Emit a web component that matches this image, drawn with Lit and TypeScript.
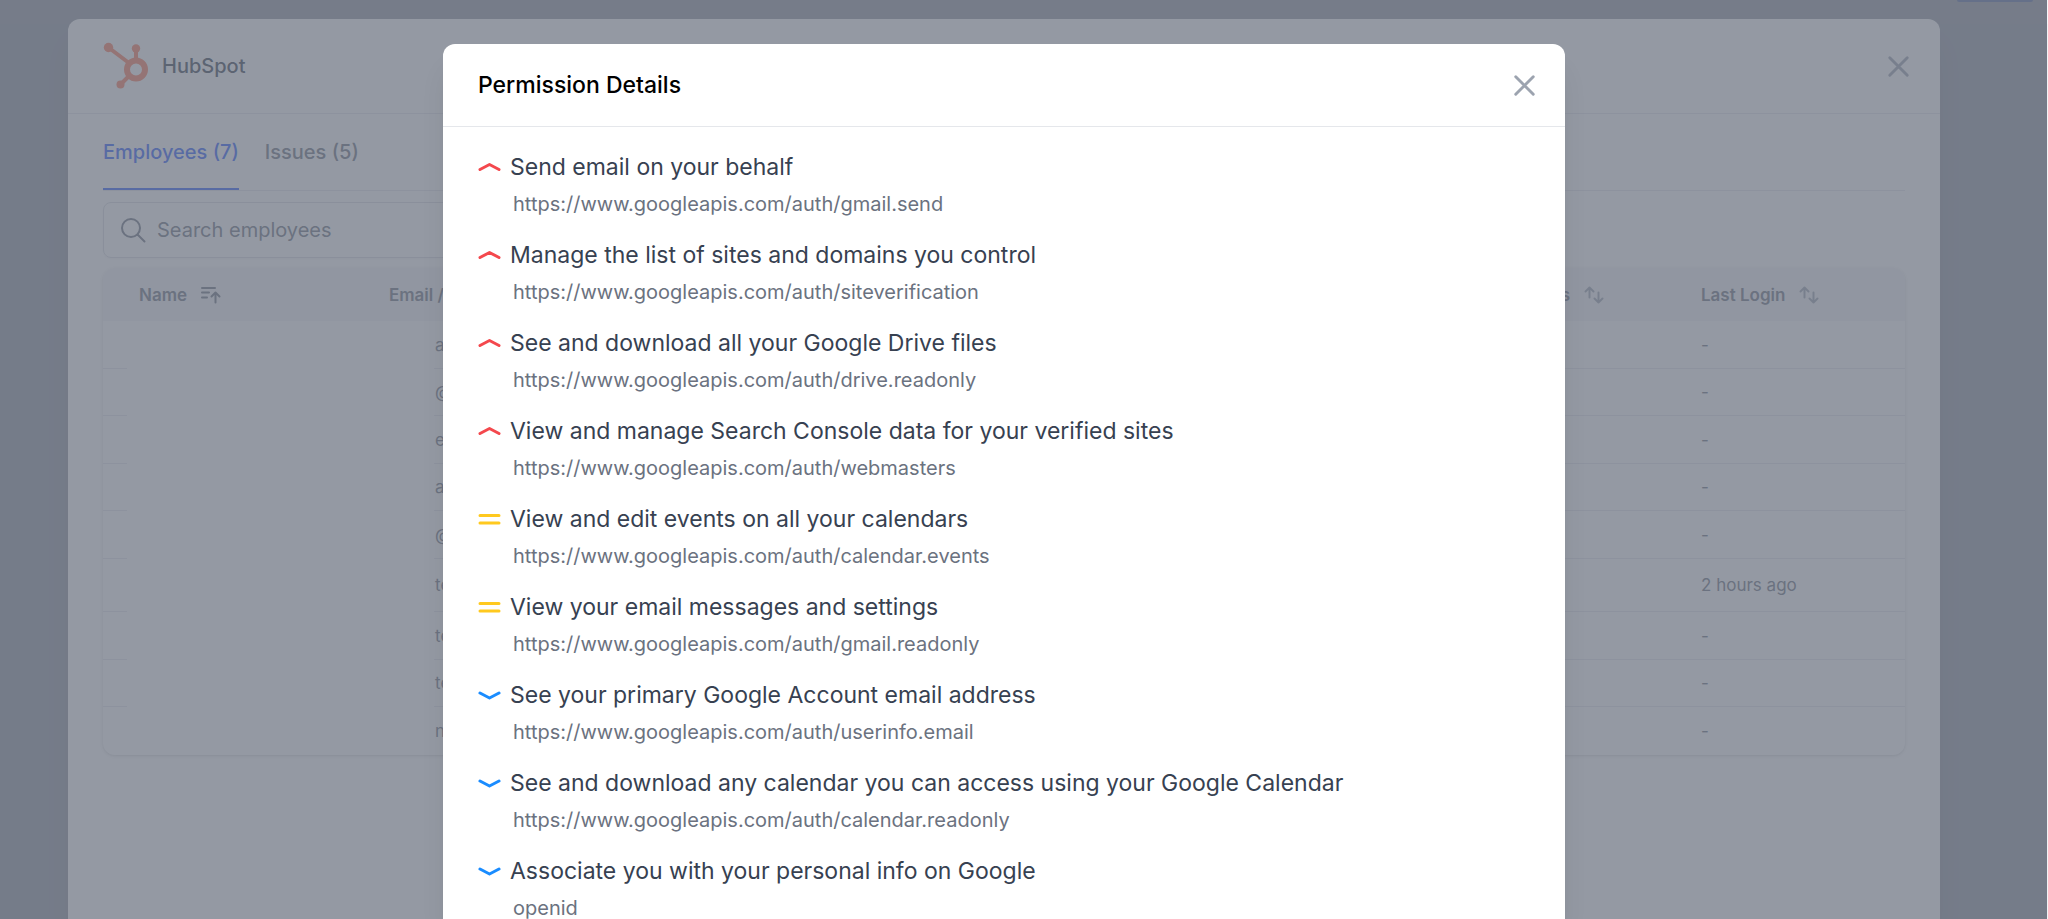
import { LitElement, html, css, svg } from "lit";
import { customElement, property } from "lit/decorators.js";

type Level = "high" | "medium" | "low";

interface Permission {
  level: Level;
  title: string;
  scope: string;
}

const API = "https://www.googleapis.com/auth/";

const PERMISSIONS: Permission[] = [
  { level: "high", title: "Send email on your behalf", scope: API + "gmail.send" },
  { level: "high", title: "Manage the list of sites and domains you control", scope: API + "siteverification" },
  { level: "high", title: "See and download all your Google Drive files", scope: API + "drive.readonly" },
  { level: "high", title: "View and manage Search Console data for your verified sites", scope: API + "webmasters" },
  { level: "medium", title: "View and edit events on all your calendars", scope: API + "calendar.events" },
  { level: "medium", title: "View your email messages and settings", scope: API + "gmail.readonly" },
  { level: "low", title: "See your primary Google Account email address", scope: API + "userinfo.email" },
  { level: "low", title: "See and download any calendar you can access using your Google Calendar", scope: API + "calendar.readonly" },
  { level: "low", title: "Associate you with your personal info on Google", scope: "openid" },
];

const EMPLOYEES = [
  { email: "a@", login: "-" },
  { email: "@n", login: "-" },
  { email: "e@", login: "-" },
  { email: "at", login: "-" },
  { email: "@", login: "-" },
  { email: "te", login: "2 hours ago" },
  { email: "te", login: "-" },
  { email: "te", login: "-" },
  { email: "n", login: "-" },
];

const sortIcon = html`<svg class="sort" viewBox="0 0 20 18" aria-hidden="true">
  <path d="M1.500 5.500 5.500 1.500l4 4M5.500 1.500v10M10.500 12.500l4 4 4-4M14.500 16.500v-10" />
</svg>`;

const sortedIcon = html`<svg class="sort sorted" viewBox="0 0 20 18" aria-hidden="true">
  <path d="M1 2h13M1 6.500h7M1 11.500h5M10.500 10.500l4-4 4 4M14.500 6.500v10" />
</svg>`;

@customElement("close-button")
export class CloseButton extends LitElement {
  @property() label = "Close";

  static styles = css`
    :host { display: block; }
    .close {
      display: block;
      padding: 0;
      border: 0;
      background: none;
      color: #9ca3af;
      cursor: pointer;
    }
    svg { display: block; width: 35px; height: 35px; }
  `;

  render() {
    return html`<button class="close" type="button" aria-label=${this.label}>
      <svg viewBox="0 0 24 24" fill="none" stroke="currentColor" stroke-width="2" stroke-linecap="round">
        <path d="M6 18 18 6M6 6l12 12" />
      </svg>
    </button>`;
  }
}

@customElement("level-icon")
export class LevelIcon extends LitElement {
  @property() level: Level = "low";

  static styles = css`
    :host { display: block; }
    svg { display: block; width: 23px; height: 16px; fill: none; stroke-width: 3; stroke-linecap: round; stroke-linejoin: round; }
    .high { stroke: #f4484d; }
    .medium { stroke: #ffc91f; }
    .low { stroke: #1a8cff; }
  `;

  render() {
    const shape = {
      high: svg`<path d="M2 10.500 11.500 5.500 21 10.500" />`,
      medium: svg`<path d="M2 4.500h19M2 12h19" />`,
      low: svg`<path d="M2 6l9.500 5L21 6" />`,
    }[this.level];
    return html`<svg class=${this.level} viewBox="0 0 23 16" aria-hidden="true">${shape}</svg>`;
  }
}

@customElement("employees-panel")
export class EmployeesPanel extends LitElement {
  static styles = css`
    :host {
      display: block;
      flex: 1;
      background: #fff;
      border-radius: 12px 12px 0 0;
      box-shadow: 0 23px 29px -6px rgba(0, 0, 0, 0.1), 0 12px 12px -6px rgba(0, 0, 0, 0.04);
    }
    .head {
      display: flex;
      align-items: center;
      gap: 13px;
      height: 94px;
      padding: 0 24px 0 35px;
      border-bottom: 1px solid #e5e7eb;
    }
    .logo { width: 46px; height: 48px; }
    h2 { flex: 1; margin: 0; font-size: 20px; font-weight: 500; line-height: 28px; color: #374151; }
    .body { padding: 0 35px; }
    .tabs { display: flex; gap: 26px; height: 76px; border-bottom: 1px solid #e5e7eb; }
    .tab {
      padding: 2px 0 0;
      border: 0;
      border-bottom: 2px solid transparent;
      background: none;
      font: 500 20px/28px Inter, sans-serif;
      color: #6b7280;
    }
    .tab[aria-selected="true"] { color: #2a5bff; border-color: #2a5bff; }
    .search {
      display: flex;
      align-items: center;
      gap: 11px;
      box-sizing: border-box;
      max-width: 524px;
      height: 56px;
      margin: 11px 0 10px;
      padding: 0 16px;
      border: 1px solid #d9dce1;
      border-radius: 8px;
      box-shadow: 0 1px 2px rgba(0, 0, 0, 0.05);
      color: #6b7280;
    }
    .search svg { width: 26px; height: 26px; fill: none; stroke: currentColor; stroke-width: 2; stroke-linecap: round; }
    input {
      flex: 1;
      min-width: 0;
      padding: 0;
      border: 0;
      outline: 0;
      background: none;
      font: 20px/28px Inter, sans-serif;
      color: inherit;
    }
    input::placeholder { color: #6b7280; opacity: 1; }
    .card {
      overflow: hidden;
      border-radius: 12px;
      box-shadow: 0 1px 4px rgba(0, 0, 0, 0.12), 0 1px 2px rgba(0, 0, 0, 0.06);
    }
    table { width: 100%; table-layout: fixed; border-spacing: 0; }
    .c-edge { width: 24px; }
    .c-name { width: 230px; }
    .c-lead { width: 77px; }
    .c-login { width: 236px; }
    th {
      height: 53px;
      padding: 0;
      background: #f3f4f6;
      font-size: 17px;
      font-weight: 600;
      text-align: left;
      white-space: nowrap;
      color: #6b7280;
    }
    td { height: 47px; padding: 0; border-bottom: 1px solid #e5e7eb; font-size: 17px; line-height: 20px; color: #6b7280; }
    tr:nth-child(even) td { height: 46px; }
    tr:nth-child(6) td { height: 52px; }
    tr:last-child td, td.plain { border-color: transparent; }
    .label { display: flex; align-items: center; gap: 14px; padding-left: 32px; }
    .first { padding-left: 36px; }
    .end { justify-content: flex-end; padding-right: 65px; }
    td.login { padding-left: 32px; }
    td.mail { padding-left: 1px; }
    .sort { width: 20px; height: 18px; fill: none; stroke: #9ca3af; stroke-width: 2; stroke-linecap: round; stroke-linejoin: round; }
    .sorted { stroke: #6b7280; }
  `;

  render() {
    return html`
      <header class="head">
        <svg class="logo" viewBox="0 0 46 48" aria-hidden="true">
          <g fill="none" stroke="#ff7a59">
            <path d="M5.500 5.500 26 21M33 7v13M27 33l-9 9" stroke-width="4" />
            <circle cx="33" cy="27.500" r="9" stroke-width="6" />
          </g>
          <g fill="#ff7a59">
            <circle cx="5.500" cy="5.500" r="4.700" />
            <circle cx="33" cy="6.500" r="4.200" />
            <circle cx="17.500" cy="42.500" r="4" />
          </g>
        </svg>
        <h2>HubSpot</h2>
        <close-button label="Close HubSpot"></close-button>
      </header>
      <div class="body">
        <div class="tabs" role="tablist">
          <button class="tab" type="button" role="tab" aria-selected="true">Employees (7)</button>
          <button class="tab" type="button" role="tab" aria-selected="false">Issues (5)</button>
        </div>
        <label class="search">
          <svg viewBox="0 0 26 26" aria-hidden="true"><circle cx="11" cy="11" r="9" /><path d="M17.500 17.500 24.500 24.500" /></svg>
          <input type="search" placeholder="Search employees" aria-label="Search employees" />
        </label>
        <div class="card">
          <table>
            <colgroup>
              <col class="c-edge" /><col class="c-name" /><col class="c-lead" /><col /><col class="c-login" />
            </colgroup>
            <thead>
              <tr>
                <th colspan="2"><div class="label first">Name ${sortedIcon}</div></th>
                <th><div class="label">Email /</div></th>
                <th><div class="label end">s ${sortIcon}</div></th>
                <th><div class="label">Last Login ${sortIcon}</div></th>
              </tr>
            </thead>
            <tbody>
              ${EMPLOYEES.map(
                (row) => html`<tr>
                  <td></td>
                  <td class="plain"></td>
                  <td class="plain"></td>
                  <td class="mail">${row.email}</td>
                  <td class="login">${row.login}</td>
                </tr>`
              )}
            </tbody>
          </table>
        </div>
      </div>
    `;
  }
}

@customElement("permission-dialog")
export class PermissionDialog extends LitElement {
  static styles = css`
    :host {
      display: block;
      flex: 0 1 1122px;
      background: #fff;
      border-radius: 12px 12px 0 0;
      box-shadow: 0 23px 29px -6px rgba(0, 0, 0, 0.1), 0 12px 12px -6px rgba(0, 0, 0, 0.04);
    }
    .head {
      display: flex;
      align-items: center;
      height: 82px;
      padding: 0 23px 0 35px;
      border-bottom: 1px solid #e5e7eb;
    }
    h1 { flex: 1; margin: 0; font-size: 23px; font-weight: 500; line-height: 32px; color: #000; }
    ul { display: grid; gap: 23px; margin: 0; padding: 24px 35px; list-style: none; }
    li { display: grid; gap: 9px; }
    .title { display: flex; align-items: center; gap: 9px; font-size: 23px; line-height: 32px; color: #374151; }
    .scope { padding-left: 35px; font-size: 20px; line-height: 24px; color: #6b7280; }
  `;

  render() {
    return html`
      <header class="head">
        <h1>Permission Details</h1>
        <close-button label="Close permission details"></close-button>
      </header>
      <ul>
        ${PERMISSIONS.map(
          (p) => html`<li>
            <div class="title"><level-icon .level=${p.level}></level-icon>${p.title}</div>
            <div class="scope">${p.scope}</div>
          </li>`
        )}
      </ul>
    `;
  }
}

@customElement("app-root")
export class AppRoot extends LitElement {
  static styles = css`
    :host {
      display: block;
      position: relative;
      height: 100vh;
      overflow: hidden;
      background: #f3f4f6;
      font-family: Inter, sans-serif;
    }
    .topbar {
      display: flex;
      justify-content: flex-end;
      align-items: flex-start;
      height: 24px;
      padding-right: 15px;
      background: #f7f8fa;
    }
    .action { width: 76px; height: 2px; border-radius: 0 0 6px 6px; background: #2a5bff; }
    .layer {
      position: absolute;
      inset: 0 1px 0 0;
      display: flex;
      justify-content: center;
      background: rgba(107, 114, 128, 0.72);
    }
    .outer { padding: 19px 107px 0 68px; }
    .inner { padding: 44px 39px 0 0; }
  `;

  render() {
    return html`
      <div class="topbar"><div class="action"></div></div>
      <div class="layer outer"><employees-panel></employees-panel></div>
      <div class="layer inner"><permission-dialog role="dialog" aria-label="Permission Details"></permission-dialog></div>
    `;
  }
}
